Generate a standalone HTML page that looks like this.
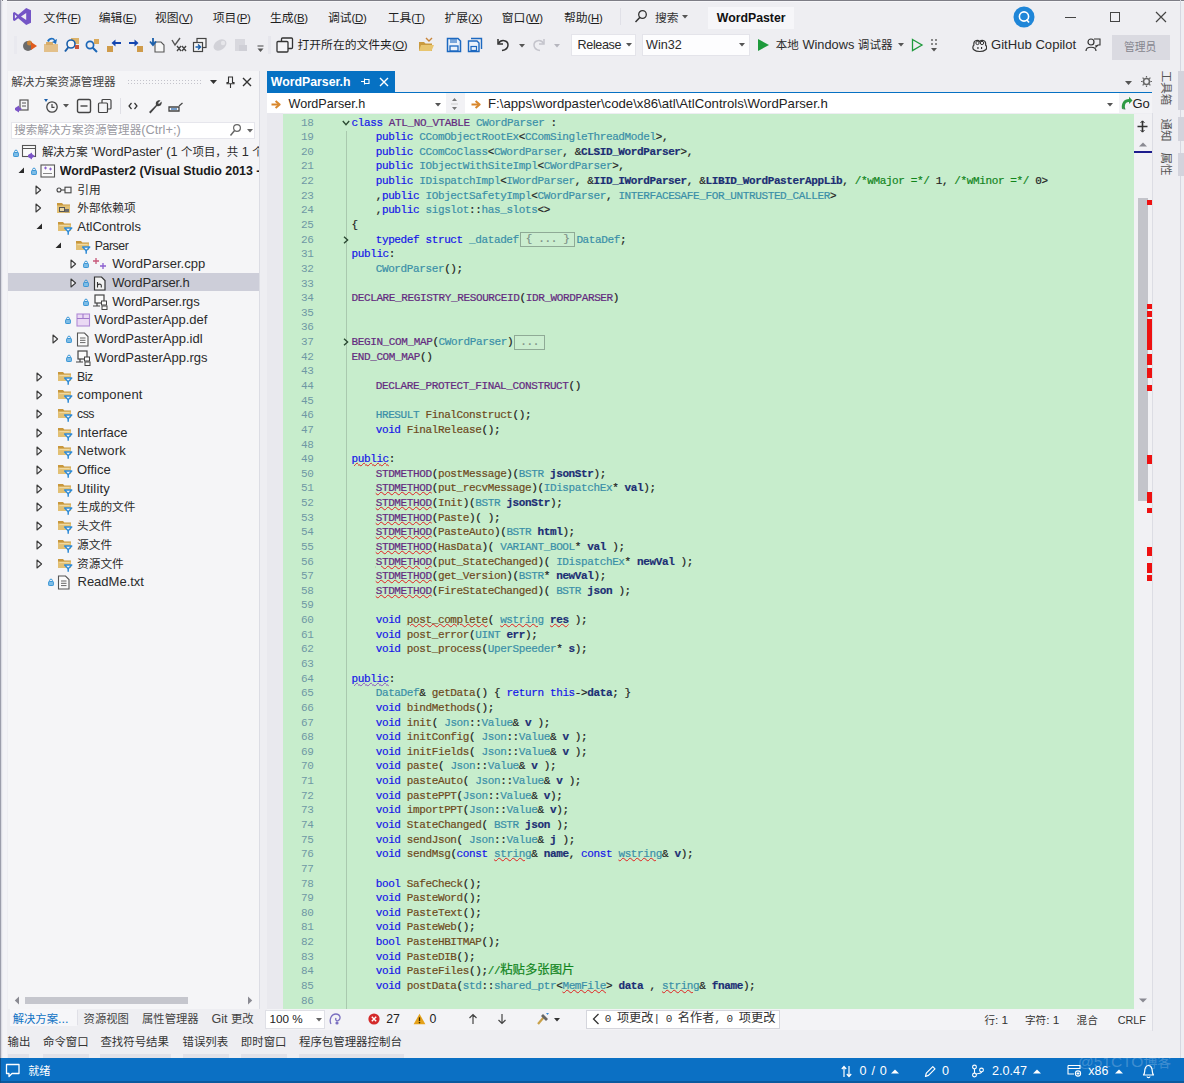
<!DOCTYPE html>
<html lang="zh-CN"><head><meta charset="utf-8"><title>WordPaster - Microsoft Visual Studio</title>
<style>
html,body{margin:0;padding:0;}
body{width:1184px;height:1083px;overflow:hidden;background:#eeeef2;}
#app{position:relative;width:1184px;height:1083px;overflow:hidden;background:#eeeef2;
 font-family:"Liberation Sans","Noto Sans CJK SC",sans-serif;font-size:13px;color:#2b2b2b;}
.t{position:absolute;white-space:pre;}
.r{position:absolute;}
i{font-style:normal;}
i.c{font-size:.9em;}
.b{font-weight:bold;}
u{text-decoration:underline;text-underline-offset:1px;}
.zh{font-size:12.4px;letter-spacing:0;}
.code{-webkit-text-stroke:0.2px currentColor;font-family:"Liberation Mono","Noto Sans CJK SC",monospace;font-size:11px;letter-spacing:-0.38px;color:#222;}
.ln{font-family:"Liberation Mono",monospace;font-size:11px;letter-spacing:-0.38px;color:#6f98a4;text-align:right;width:40px;}
.k{color:#1515e8;} .ty{color:#3a8fa8;} .m{color:#642a80;} .f{color:#6e4a1c;} .p{color:#1c2f74;font-weight:bold;} .cm{color:#12851c;} .g{color:#777;}
.sq{text-decoration:underline wavy #e02020;text-decoration-thickness:1px;text-underline-offset:0px;}
.sqb{text-decoration:underline wavy #8a4fc0;text-decoration-thickness:1px;text-underline-offset:0px;}
.box{display:inline-block;border:1px solid #8faa96;color:#7d8f85;height:15px;line-height:13px;margin:0 1px;padding:0 5px;vertical-align:middle;box-sizing:border-box;background:#cbeed0;}
.chg{font-family:"Liberation Mono","Noto Sans CJK SC",monospace;font-size:11px;letter-spacing:-.5px;color:#333;}
.chg .z{font-size:12.2px;letter-spacing:0;}
.mz{font-size:11.8px;letter-spacing:0;}

</style></head>
<body>
<div id="app">
<div class="r" style="left:0px;top:0px;width:1184px;height:1.2px;background:#7d7d86;"></div>
<div class="r" style="left:0px;top:1.2px;width:1184px;height:1px;background:#f6f6f9;"></div>
<div class="r" style="left:0px;top:0px;width:1.3px;height:1083px;background:#9b9dab;"></div>
<div class="r" style="left:1.3px;top:0px;width:1.2px;height:1060px;background:#dadbe3;"></div>
<div class="r" style="left:2.5px;top:0px;width:4.5px;height:1060px;background:#f3f3f7;"></div>
<div class="r" style="left:1179.5px;top:0px;width:1.5px;height:1060px;background:#d6d7e0;"></div>
<svg class="r" style="left:12px;top:7px;" width="20" height="19" viewBox="0 0 20 19"><path d="M14.2 1 L19 3.2 V15.8 L14.2 18 L6.2 11.2 L2.6 14 L1 13.2 V5.8 L2.6 5 L6.2 7.8 Z M14.2 6 L9 9.5 L14.2 13 Z M2.9 7.4 V11.6 L5 9.5 Z" fill="#7455c6" fill-rule="evenodd"/></svg>
<div class="t " style="left:43.6px;top:7.80px;height:20px;line-height:20px;font-size:11.4px;letter-spacing:-.35px;color:#1e1e1e;"><i class="mz">文件</i>(<u>F</u>)</div>
<div class="t " style="left:98.8px;top:7.80px;height:20px;line-height:20px;font-size:11.4px;letter-spacing:-.35px;color:#1e1e1e;"><i class="mz">编辑</i>(<u>E</u>)</div>
<div class="t " style="left:155px;top:7.80px;height:20px;line-height:20px;font-size:11.4px;letter-spacing:-.35px;color:#1e1e1e;"><i class="mz">视图</i>(<u>V</u>)</div>
<div class="t " style="left:212.8px;top:7.80px;height:20px;line-height:20px;font-size:11.4px;letter-spacing:-.35px;color:#1e1e1e;"><i class="mz">项目</i>(<u>P</u>)</div>
<div class="t " style="left:270px;top:7.80px;height:20px;line-height:20px;font-size:11.4px;letter-spacing:-.35px;color:#1e1e1e;"><i class="mz">生成</i>(<u>B</u>)</div>
<div class="t " style="left:328px;top:7.80px;height:20px;line-height:20px;font-size:11.4px;letter-spacing:-.35px;color:#1e1e1e;"><i class="mz">调试</i>(<u>D</u>)</div>
<div class="t " style="left:387.7px;top:7.80px;height:20px;line-height:20px;font-size:11.4px;letter-spacing:-.35px;color:#1e1e1e;"><i class="mz">工具</i>(<u>T</u>)</div>
<div class="t " style="left:444.5px;top:7.80px;height:20px;line-height:20px;font-size:11.4px;letter-spacing:-.35px;color:#1e1e1e;"><i class="mz">扩展</i>(<u>X</u>)</div>
<div class="t " style="left:501.8px;top:7.80px;height:20px;line-height:20px;font-size:11.4px;letter-spacing:-.35px;color:#1e1e1e;"><i class="mz">窗口</i>(<u>W</u>)</div>
<div class="t " style="left:564px;top:7.80px;height:20px;line-height:20px;font-size:11.4px;letter-spacing:-.35px;color:#1e1e1e;"><i class="mz">帮助</i>(<u>H</u>)</div>
<svg class="r" style="left:634px;top:9px;" width="14" height="15" viewBox="0 0 14 15"><circle cx="8.5" cy="5.5" r="3.8" fill="none" stroke="#333" stroke-width="1.3"/><path d="M6 8.2 L1.5 13" stroke="#333" stroke-width="1.5"/></svg>
<div class="t " style="left:655px;top:7.80px;height:20px;line-height:20px;color:#333;"><i class="mz">搜索</i></div>
<svg class="r" style="left:682px;top:15px;" width="7" height="5" viewBox="0 0 7 5"><path d="M0 0 H6 L3 3.5 Z" fill="#555"/></svg>
<div class="r" style="left:708px;top:6.5px;width:86px;height:22px;background:#f6f6f9;"></div>
<div class="r" style="left:620px;top:8px;width:1px;height:17px;background:#e0e0e7;"></div>
<div class="t b" style="left:716.8px;top:7.80px;height:20px;line-height:20px;font-size:12.3px;color:#111;">WordPaster</div>
<svg class="r" style="left:1013px;top:6px;" width="22" height="22" viewBox="0 0 22 22"><circle cx="11" cy="11" r="10.5" fill="#1f86d8"/><circle cx="11" cy="10.5" r="4.6" fill="none" stroke="#fff" stroke-width="1.6"/><path d="M13.5 13.5 L16 16.5" stroke="#fff" stroke-width="1.6"/></svg>
<div class="r" style="left:1065px;top:17px;width:11px;height:1px;background:#444;"></div>
<div class="r" style="left:1110px;top:12px;width:10px;height:10px;background:transparent;border:1px solid #444;box-sizing:border-box;"></div>
<svg class="r" style="left:1155px;top:11px;" width="12" height="12" viewBox="0 0 12 12"><path d="M1 1 L11 11 M11 1 L1 11" stroke="#444" stroke-width="1.2"/></svg>
<div class="r" style="left:14px;top:36px;width:3px;height:18px;background:#e9e9ef;"></div>
<svg class="r" style="left:22px;top:37px;" width="16" height="16" viewBox="0 0 16 16"><circle cx="6" cy="9" r="5" fill="#6b6b6b"/><circle cx="7.5" cy="6" r="2.5" fill="#c9853a"/><path d="M9 5 L15 9 L9 13 Z" fill="#e05a1c"/></svg>
<svg class="r" style="left:43px;top:37px;" width="16" height="16" viewBox="0 0 16 16"><path d="M1 7 H15 V15 H1 Z" fill="#e3c08a"/><path d="M3 5 H10 V8 H3Z" fill="#d8ad6a"/><path d="M4 4 C6 0 11 0 12 3 L14 2 L13 7 L9 5 L11 4 C10 2 7 2 6 5Z" fill="#1f6fc0"/></svg>
<svg class="r" style="left:64px;top:37px;" width="16" height="16" viewBox="0 0 16 16"><path d="M7 1 H15 V7 H7Z" fill="#dcb36a"/><circle cx="7" cy="7" r="4" fill="#f6f6f6" stroke="#1b5faa" stroke-width="1.6"/><path d="M4.5 10 L1 14.5" stroke="#1b5faa" stroke-width="2"/><rect x="11" y="8" width="4" height="4" fill="#c9533a"/></svg>
<svg class="r" style="left:84px;top:37px;" width="16" height="16" viewBox="0 0 16 16"><circle cx="6" cy="8" r="3.6" fill="none" stroke="#1b67b8" stroke-width="1.7"/><path d="M8.7 10.7 L13 15" stroke="#1b67b8" stroke-width="2"/><rect x="10" y="2" width="5" height="5" fill="#d8a85a"/></svg>
<svg class="r" style="left:106px;top:37px;" width="16" height="16" viewBox="0 0 16 16"><rect x="1" y="9" width="6" height="6" fill="#cf9b4a"/><path d="M15 5 H9.5 V2.5 L5.5 6 L9.5 9.5 V7 H15Z" fill="#1446b0"/></svg>
<svg class="r" style="left:128px;top:37px;" width="16" height="16" viewBox="0 0 16 16"><rect x="9" y="9" width="6" height="6" fill="#cf9b4a"/><path d="M1 5 H6.5 V2.5 L10.5 6 L6.5 9.5 V7 H1Z" fill="#1446b0"/></svg>
<svg class="r" style="left:149px;top:37px;" width="16" height="16" viewBox="0 0 16 16"><path d="M6 5 H12 L15 8 V15 H6Z" fill="#f6f6f6" stroke="#555" stroke-width="1.1"/><path d="M4 1 V7 M1 4.5 L4 8 L7 4.5" fill="none" stroke="#1b5faa" stroke-width="1.8"/></svg>
<svg class="r" style="left:171px;top:37px;" width="16" height="16" viewBox="0 0 16 16"><path d="M1 3 L4 8 L9 1" fill="none" stroke="#555" stroke-width="1.4"/><path d="M6 9 L10 14 M10 9 L6 14 M11 9 L15 14 M15 9 L11 14" stroke="#444" stroke-width="1.3"/></svg>
<svg class="r" style="left:192px;top:37px;" width="16" height="16" viewBox="0 0 16 16"><rect x="5" y="1.5" width="9" height="9" fill="#f6f6f6" stroke="#444" stroke-width="1.2"/><rect x="1.5" y="5.5" width="9" height="9" fill="#f6f6f6" stroke="#444" stroke-width="1.2"/><path d="M3.5 10 H8 M6 7.5 L8.5 10 L6 12.5" fill="none" stroke="#1b5faa" stroke-width="1.4"/></svg>
<svg class="r" style="left:212px;top:37px;" width="16" height="16" viewBox="0 0 16 16"><ellipse cx="8" cy="8" rx="7" ry="5" transform="rotate(-35 8 8)" fill="#d2d2d8"/><circle cx="11" cy="6" r="2.2" fill="#e6e6ea"/></svg>
<svg class="r" style="left:233px;top:37px;" width="16" height="16" viewBox="0 0 16 16"><rect x="2" y="2" width="10" height="12" fill="#d8d8de"/><rect x="6" y="8" width="8" height="6" fill="#cfcfd6"/></svg>
<svg class="r" style="left:256px;top:45px;" width="10" height="9" viewBox="0 0 10 9"><path d="M1.5 1 H7.5" stroke="#555" stroke-width="1.1"/><path d="M1.5 3.5 H7.5 L4.5 7Z" fill="#555"/></svg>
<div class="r" style="left:268px;top:36px;width:3px;height:18px;background:#e6e6ec;"></div>
<svg class="r" style="left:276px;top:37px;" width="18" height="16" viewBox="0 0 18 16"><rect x="5.5" y="1" width="11" height="10.5" rx="1" fill="#f4f4f7" stroke="#333" stroke-width="1.3"/><rect x="1" y="4.5" width="11" height="10.5" rx="1" fill="#f4f4f7" stroke="#333" stroke-width="1.3"/></svg>
<div class="t " style="left:297.5px;top:35.30px;height:20px;line-height:20px;font-size:11.4px;letter-spacing:-.35px;color:#1e1e1e;"><i class="mz">打开所在的文件夹</i>(<u>O</u>)</div>
<svg class="r" style="left:418px;top:37px;" width="16" height="16" viewBox="0 0 16 16"><path d="M1 5 H6 L7.5 6.5 H14 V14 H1Z" fill="#c99a3f"/><path d="M3 8 H16 L13.5 14 H1Z" fill="#e8c56f"/><path d="M8 1 L11 4 L14 1" fill="none" stroke="#c9853a" stroke-width="1.4"/></svg>
<svg class="r" style="left:446px;top:37px;" width="16" height="16" viewBox="0 0 16 16"><path d="M1.5 1.5 H12 L14.5 4 V14.5 H1.5Z" fill="#eaf2fb" stroke="#1c68c0" stroke-width="1.5"/><rect x="4" y="2" width="7" height="4" fill="#1c68c0" opacity=".55"/><rect x="4" y="9" width="8" height="5" fill="none" stroke="#1c68c0" stroke-width="1.3"/></svg>
<svg class="r" style="left:467px;top:37px;" width="16" height="16" viewBox="0 0 16 16"><path d="M4 1.5 H14.5 V12" fill="none" stroke="#1c68c0" stroke-width="1.4"/><path d="M1.5 4 H10 L12 6 V14.5 H1.5Z" fill="#eaf2fb" stroke="#1c68c0" stroke-width="1.4"/><rect x="4" y="9.5" width="5.5" height="4" fill="none" stroke="#1c68c0" stroke-width="1.2"/></svg>
<svg class="r" style="left:496px;top:37px;" width="14" height="15" viewBox="0 0 14 15"><path d="M2 2 V7 H7" fill="none" stroke="#333" stroke-width="1.5"/><path d="M2.5 6.5 C5 2 12 3 12 8 C12 11 9 13 6 13.5" fill="none" stroke="#333" stroke-width="1.5"/></svg>
<svg class="r" style="left:519px;top:44px;" width="7" height="5" viewBox="0 0 7 5"><path d="M0 0 H6 L3 3.5 Z" fill="#555"/></svg>
<svg class="r" style="left:532px;top:37px;" width="14" height="15" viewBox="0 0 14 15"><path d="M12 2 V7 H7" fill="none" stroke="#c4c4cc" stroke-width="1.5"/><path d="M11.5 6.5 C9 2 2 3 2 8 C2 11 5 13 8 13.5" fill="none" stroke="#c4c4cc" stroke-width="1.5"/></svg>
<svg class="r" style="left:554px;top:44px;" width="7" height="5" viewBox="0 0 7 5"><path d="M0 0 H6 L3 3.5 Z" fill="#b5b5bd"/></svg>
<div class="r" style="left:571px;top:34px;width:65px;height:22px;background:#fdfdfe;border:1px solid #e4e4ea;box-sizing:border-box;"></div>
<div class="t " style="left:577.6px;top:35.30px;height:20px;line-height:20px;font-size:12.6px;letter-spacing:-.4px;">Release</div>
<svg class="r" style="left:626px;top:43px;" width="7" height="5" viewBox="0 0 7 5"><path d="M0 0 H6 L3 3.5 Z" fill="#555"/></svg>
<div class="r" style="left:642px;top:34px;width:108px;height:22px;background:#fdfdfe;border:1px solid #e4e4ea;box-sizing:border-box;"></div>
<div class="t " style="left:646px;top:35.30px;height:20px;line-height:20px;font-size:12.6px;">Win32</div>
<svg class="r" style="left:739px;top:43px;" width="7" height="5" viewBox="0 0 7 5"><path d="M0 0 H6 L3 3.5 Z" fill="#555"/></svg>
<svg class="r" style="left:756px;top:38px;" width="14" height="14" viewBox="0 0 14 14"><path d="M2 1 L13 7 L2 13Z" fill="#1e9a3c"/></svg>
<div class="t " style="left:775.8px;top:35.30px;height:20px;line-height:20px;font-size:12.8px;"><i class="c">本地</i> Windows <i class="c">调试器</i></div>
<svg class="r" style="left:898px;top:43px;" width="7" height="5" viewBox="0 0 7 5"><path d="M0 0 H6 L3 3.5 Z" fill="#555"/></svg>
<svg class="r" style="left:910px;top:38px;" width="14" height="14" viewBox="0 0 14 14"><path d="M2.5 1.5 L12 7 L2.5 12.5Z" fill="none" stroke="#1e9a3c" stroke-width="1.3"/></svg>
<svg class="r" style="left:929px;top:38px;" width="10" height="16" viewBox="0 0 10 16"><circle cx="3" cy="2" r="1" fill="#666"/><circle cx="7" cy="2" r="1" fill="#666"/><circle cx="3" cy="6" r="1" fill="#666"/><circle cx="7" cy="6" r="1" fill="#666"/><path d="M2 10 H8 L5 13.5Z" fill="#555"/></svg>
<svg class="r" style="left:971.5px;top:38px;" width="15.5" height="14.5" viewBox="0 0 17 16"><path d="M2 6 C2 2 7 2 8.5 4 C10 2 15 2 15 6 V8 C16.5 9 16.5 12 15 13 C12 15.5 5 15.5 2 13 C0.5 12 0.5 9 2 8Z" fill="none" stroke="#333" stroke-width="1.3"/><circle cx="6" cy="5.5" r="1.8" fill="none" stroke="#333" stroke-width="1.1"/><circle cx="11" cy="5.5" r="1.8" fill="none" stroke="#333" stroke-width="1.1"/><path d="M6.5 10 V12 M10.5 10 V12" stroke="#333" stroke-width="1.3"/></svg>
<div class="t " style="left:991px;top:35.00px;height:20px;line-height:20px;font-size:13.1px;">GitHub Copilot</div>
<svg class="r" style="left:1085px;top:37px;" width="16" height="16" viewBox="0 0 16 16"><circle cx="6" cy="5" r="3" fill="none" stroke="#333" stroke-width="1.2"/><path d="M1 14 C1 9 11 9 11 14" fill="none" stroke="#333" stroke-width="1.2"/><path d="M9 2 H15 V8 H13 L11 10 V8" fill="none" stroke="#333" stroke-width="1.1"/></svg>
<div class="r" style="left:1112px;top:34.5px;width:57.5px;height:25px;background:#dadae1;"></div>
<div class="t " style="left:1124px;top:37.00px;height:20px;line-height:20px;font-size:12px;color:#85858e;"><i class="c">管理员</i></div>
<div class="r" style="left:8px;top:71px;width:252px;height:937.5px;background:#f5f5f7;"></div>
<div class="r" style="left:259px;top:71px;width:1px;height:937.5px;background:#dcdde4;"></div>
<div class="r" style="left:9.6px;top:1008.5px;width:67px;height:17.5px;background:#f6f6f9;"></div>
<div class="r" style="left:77px;top:1010px;width:1px;height:15px;background:#e0e0e7;"></div>
<div class="t " style="left:11.2px;top:72.40px;height:20px;line-height:20px;font-size:12.9px;color:#444;"><i class="c">解决方案资源管理器</i></div>
<div class="r" style="left:127px;top:79px;width:75px;height:6px;background:transparent;background-image:radial-gradient(#c4c4cc 0.8px,transparent 1px);background-size:3px 3px;"></div>
<svg class="r" style="left:210px;top:80px;" width="8" height="5" viewBox="0 0 8 5"><path d="M0 0 H7 L3.5 4 Z" fill="#333"/></svg>
<svg class="r" style="left:226px;top:76px;" width="9" height="13" viewBox="0 0 9 13"><path d="M2.5 1 H6.5 V6.5 H8 V7.8 H1 V6.5 H2.5Z M4.5 8 V12" fill="#f5f5f7" stroke="#333" stroke-width="1.1"/></svg>
<svg class="r" style="left:242px;top:77px;" width="10" height="10" viewBox="0 0 10 10"><path d="M1 1 L9 9 M9 1 L1 9" stroke="#333" stroke-width="1.4"/></svg>
<svg class="r" style="left:14px;top:98px;" width="16" height="16" viewBox="0 0 16 16"><rect x="6" y="2" width="8" height="10" fill="none" stroke="#555" stroke-width="1.2"/><path d="M8 5 H12 M8 8 H12" stroke="#555"/><path d="M1 10 L5 7.5 V14.5 L1 12Z M5 9 L8 11 L5 13" fill="#7c55c8"/></svg>
<svg class="r" style="left:43px;top:98px;" width="16" height="16" viewBox="0 0 16 16"><circle cx="9" cy="9" r="5.2" fill="none" stroke="#444" stroke-width="1.3"/><path d="M9 6 V9.3 H11.5" fill="none" stroke="#444" stroke-width="1.2"/><path d="M1 1 L5 1 L3 4Z" fill="#1b5faa"/></svg>
<svg class="r" style="left:63px;top:104px;" width="7" height="5" viewBox="0 0 7 5"><path d="M0 0 H6 L3 3.5 Z" fill="#555"/></svg>
<svg class="r" style="left:76px;top:98px;" width="16" height="16" viewBox="0 0 16 16"><rect x="1.5" y="1.5" width="13" height="13" rx="1.5" fill="none" stroke="#444" stroke-width="1.4"/><path d="M4.5 8 H11.5" stroke="#444" stroke-width="1.4"/></svg>
<svg class="r" style="left:97px;top:98px;" width="16" height="16" viewBox="0 0 16 16"><rect x="5" y="1.5" width="9" height="9.5" rx="1" fill="none" stroke="#444" stroke-width="1.2"/><rect x="1.5" y="5" width="9" height="9.5" rx="1" fill="#f5f5f7" stroke="#444" stroke-width="1.2"/></svg>
<div class="r" style="left:120px;top:98px;width:1px;height:16px;background:#e0e0e6;"></div>
<svg class="r" style="left:128px;top:102px;" width="10" height="8" viewBox="0 0 10 8"><path d="M3.5 1 L1 4 L3.5 7 M6.5 1 L9 4 L6.5 7" fill="none" stroke="#333" stroke-width="1.2"/></svg>
<svg class="r" style="left:147px;top:98px;" width="16" height="16" viewBox="0 0 16 16"><path d="M2 14 L9 7 C8 4 10.5 1.5 13.5 2.5 L11 5 L12 6 L14.5 3.5 C15.5 6.5 13 9 10 8 L3.5 15.5Z" fill="#444"/></svg>
<svg class="r" style="left:168px;top:98px;" width="16" height="16" viewBox="0 0 16 16"><path d="M1 9 H11 V13 H1Z" fill="none" stroke="#444" stroke-width="1.3"/><path d="M11 8 L14.5 5" stroke="#444" stroke-width="1.2"/><path d="M3 11 H9" stroke="#1b5faa" stroke-width="1.2"/></svg>
<div class="r" style="left:11px;top:121.5px;width:244px;height:17px;background:#ffffff;border:1px solid #e6e6ec;box-sizing:border-box;"></div>
<div class="t " style="left:14.2px;top:120.00px;height:20px;line-height:20px;font-size:12.85px;color:#9a9aa2;"><i class="c">搜索解决方案资源管理器</i>(Ctrl+;)</div>
<svg class="r" style="left:229px;top:123px;" width="13" height="14" viewBox="0 0 13 14"><circle cx="8" cy="5" r="3.4" fill="none" stroke="#666" stroke-width="1.2"/><path d="M5.6 7.6 L1.5 12.5" stroke="#666" stroke-width="1.5"/></svg>
<svg class="r" style="left:247px;top:129px;" width="7" height="5" viewBox="0 0 7 5"><path d="M0 0 H6 L3 3.5 Z" fill="#666"/></svg>
<svg class="r" style="left:13px;top:148.6px;" width="6" height="8" viewBox="0 0 6 8"><path d="M1.6 3.6 V2.4 C1.6 .7 4.4 .7 4.4 2.4 V3.6" fill="none" stroke="#3a96d6" stroke-width="1"/><rect x=".6" y="3.5" width="4.8" height="4" rx=".6" fill="#7fbde6" stroke="#3a96d6" stroke-width="1"/></svg>
<svg class="r" style="left:21px;top:144.1px;" width="17" height="16" viewBox="0 0 17 16"><rect x="1.5" y="1.5" width="13" height="11" fill="#fafafa" stroke="#555" stroke-width="1.1"/><path d="M1.5 4.5 H14.5" stroke="#555"/><path d="M7 11 L11 8.5 V15.5 L7 13Z M11 10 L14 12 L11 14" fill="#7c55c8"/></svg>
<div class="t " style="left:41.9px;top:142.10px;height:20px;line-height:20px;font-size:12.7px;width:217px;overflow:hidden;"><i class="c">解决方案</i> 'WordPaster' (1 <i class="c">个项目，共</i> 1 <i class="c">个</i>)</div>
<svg class="r" style="left:18.3px;top:167.29999999999998px;" width="7" height="7" viewBox="0 0 7 7"><path d="M6 .5 V6 H.5Z" fill="#2a2a2a"/></svg>
<svg class="r" style="left:31px;top:166.79999999999998px;" width="6" height="8" viewBox="0 0 6 8"><path d="M1.6 3.6 V2.4 C1.6 .7 4.4 .7 4.4 2.4 V3.6" fill="none" stroke="#3a96d6" stroke-width="1"/><rect x=".6" y="3.5" width="4.8" height="4" rx=".6" fill="#7fbde6" stroke="#3a96d6" stroke-width="1"/></svg>
<svg class="r" style="left:40px;top:163.79999999999998px;" width="16" height="14" viewBox="0 0 16 14"><rect x="1" y="1" width="13.5" height="12" fill="#fafafa" stroke="#555" stroke-width="1.1"/><path d="M4 4 H7 M5.5 2.6 V5.4 M9 5 H12 M10.5 3.6 V6.4" stroke="#8a5fd0" stroke-width="1"/><path d="M3 9.5 H12" stroke="#888"/></svg>
<div class="t b" style="left:59.8px;top:160.80px;height:20px;line-height:20px;font-size:12.4px;width:199px;overflow:hidden;color:#1a1a1a;">WordPaster2 (Visual Studio 2013 -</div>
<svg class="r" style="left:35px;top:184.5px;" width="7" height="10" viewBox="0 0 7 10"><path d="M1 1 L5.6 5 L1 9Z" fill="#f5f5f7" stroke="#3a3a3a" stroke-width="1.1" stroke-linejoin="round"/></svg>
<svg class="r" style="left:56px;top:185.5px;" width="17" height="8" viewBox="0 0 17 8"><circle cx="3" cy="4" r="2" fill="none" stroke="#444" stroke-width="1.1"/><path d="M5 4 H9" stroke="#444" stroke-width="1.1"/><rect x="9" y="1.2" width="6" height="5.6" fill="none" stroke="#444" stroke-width="1.1"/></svg>
<div class="t " style="left:77.2px;top:179.50px;height:20px;line-height:20px;"><i class="c">引用</i></div>
<svg class="r" style="left:35px;top:203.2px;" width="7" height="10" viewBox="0 0 7 10"><path d="M1 1 L5.6 5 L1 9Z" fill="#f5f5f7" stroke="#3a3a3a" stroke-width="1.1" stroke-linejoin="round"/></svg>
<svg class="r" style="left:56px;top:200.2px;" width="16" height="16" viewBox="0 0 16 16"><path d="M1 3 H6 L7.3 4.4 H14 V13 H1Z" fill="#c8973c"/><path d="M1 5.4 H14 V13 H1Z" fill="#e2c074"/><rect x="3" y="7" width="6" height="5" fill="#555"/><rect x="4" y="8" width="4" height="3" fill="#e9d7a8"/><rect x="9" y="9" width="4" height="3.2" fill="#6b6b6b"/></svg>
<div class="t " style="left:77.2px;top:198.20px;height:20px;line-height:20px;"><i class="c">外部依赖项</i></div>
<svg class="r" style="left:36px;top:223.39999999999998px;" width="7" height="7" viewBox="0 0 7 7"><path d="M6 .5 V6 H.5Z" fill="#2a2a2a"/></svg>
<svg class="r" style="left:57px;top:218.89999999999998px;" width="16" height="16" viewBox="0 0 16 16"><path d="M1 3 H6 L7.3 4.4 H14 V12 H1Z" fill="#c8973c"/><path d="M1 5.4 H14 V12 H1Z" fill="#e2c074"/><path d="M2.4 6.6 H12.6" stroke="#f1dca6" stroke-width="1"/><path d="M7.6 9 H14.8 L11.2 12.8Z" fill="#f5f5f7" stroke="#2f8bd6" stroke-width="1.3" stroke-linejoin="round"/><path d="M11.2 12.5 V15.8" stroke="#2f8bd6" stroke-width="1.5"/></svg>
<div class="t " style="left:77.3px;top:216.90px;height:20px;line-height:20px;">AtlControls</div>
<svg class="r" style="left:54.5px;top:242.1px;" width="7" height="7" viewBox="0 0 7 7"><path d="M6 .5 V6 H.5Z" fill="#2a2a2a"/></svg>
<svg class="r" style="left:75px;top:237.6px;" width="16" height="16" viewBox="0 0 16 16"><path d="M1 3 H6 L7.3 4.4 H14 V12 H1Z" fill="#c8973c"/><path d="M1 5.4 H14 V12 H1Z" fill="#e2c074"/><path d="M2.4 6.6 H12.6" stroke="#f1dca6" stroke-width="1"/><path d="M7.6 9 H14.8 L11.2 12.8Z" fill="#f5f5f7" stroke="#2f8bd6" stroke-width="1.3" stroke-linejoin="round"/><path d="M11.2 12.5 V15.8" stroke="#2f8bd6" stroke-width="1.5"/></svg>
<div class="t " style="left:94.7px;top:235.60px;height:20px;line-height:20px;font-size:12.3px;letter-spacing:-.4px;">Parser</div>
<svg class="r" style="left:70px;top:259.29999999999995px;" width="7" height="10" viewBox="0 0 7 10"><path d="M1 1 L5.6 5 L1 9Z" fill="#f5f5f7" stroke="#3a3a3a" stroke-width="1.1" stroke-linejoin="round"/></svg>
<svg class="r" style="left:83px;top:260.29999999999995px;" width="6" height="8" viewBox="0 0 6 8"><path d="M1.6 3.6 V2.4 C1.6 .7 4.4 .7 4.4 2.4 V3.6" fill="none" stroke="#3a96d6" stroke-width="1"/><rect x=".6" y="3.5" width="4.8" height="4" rx=".6" fill="#7fbde6" stroke="#3a96d6" stroke-width="1"/></svg>
<svg class="r" style="left:92px;top:257.29999999999995px;" width="16" height="14" viewBox="0 0 16 14"><path d="M4 1 V7 M1 4 H7" stroke="#c7577a" stroke-width="1.3"/><path d="M11 6 V12 M8 9 H14" stroke="#8a5fd0" stroke-width="1.3"/></svg>
<div class="t " style="left:112.2px;top:254.30px;height:20px;line-height:20px;">WordParser.cpp</div>
<div class="r" style="left:8px;top:273.4px;width:251px;height:17.8px;background:#cdced9;"></div>
<svg class="r" style="left:70px;top:278.0px;" width="7" height="10" viewBox="0 0 7 10"><path d="M1 1 L5.6 5 L1 9Z" fill="#f5f5f7" stroke="#3a3a3a" stroke-width="1.1" stroke-linejoin="round"/></svg>
<svg class="r" style="left:83px;top:279.0px;" width="6" height="8" viewBox="0 0 6 8"><path d="M1.6 3.6 V2.4 C1.6 .7 4.4 .7 4.4 2.4 V3.6" fill="none" stroke="#3a96d6" stroke-width="1"/><rect x=".6" y="3.5" width="4.8" height="4" rx=".6" fill="#7fbde6" stroke="#3a96d6" stroke-width="1"/></svg>
<svg class="r" style="left:92.5px;top:275.5px;" width="14" height="15" viewBox="0 0 14 15"><path d="M1.5 1 H8.5 L12 4.5 V14 H1.5Z" fill="#f2f2f2" stroke="#333" stroke-width="1.2"/><path d="M4.5 6 V11.5 M4.5 9 C6 7.6 8.3 7.8 8.3 9.6 V11.5" fill="none" stroke="#333" stroke-width="1.1"/></svg>
<div class="t " style="left:112.2px;top:273.00px;height:20px;line-height:20px;letter-spacing:-.15px;">WordParser.h</div>
<svg class="r" style="left:83px;top:297.7px;" width="6" height="8" viewBox="0 0 6 8"><path d="M1.6 3.6 V2.4 C1.6 .7 4.4 .7 4.4 2.4 V3.6" fill="none" stroke="#3a96d6" stroke-width="1"/><rect x=".6" y="3.5" width="4.8" height="4" rx=".6" fill="#7fbde6" stroke="#3a96d6" stroke-width="1"/></svg>
<svg class="r" style="left:91.5px;top:293.7px;" width="16" height="16" viewBox="0 0 16 16"><rect x="3" y="1" width="9" height="8" fill="#fafafa" stroke="#444" stroke-width="1.2"/><path d="M1 12 H8 M5 9 V12" stroke="#444" stroke-width="1.2"/><rect x="9.5" y="7" width="5" height="4" fill="#fafafa" stroke="#444"/><rect x="10" y="12" width="5" height="3.5" fill="#fafafa" stroke="#444"/></svg>
<div class="t " style="left:112.2px;top:291.70px;height:20px;line-height:20px;letter-spacing:-.2px;">WordParser.rgs</div>
<svg class="r" style="left:65.3px;top:316.4px;" width="6" height="8" viewBox="0 0 6 8"><path d="M1.6 3.6 V2.4 C1.6 .7 4.4 .7 4.4 2.4 V3.6" fill="none" stroke="#3a96d6" stroke-width="1"/><rect x=".6" y="3.5" width="4.8" height="4" rx=".6" fill="#7fbde6" stroke="#3a96d6" stroke-width="1"/></svg>
<svg class="r" style="left:76px;top:313.4px;" width="15" height="14" viewBox="0 0 15 14"><rect x="1" y="1" width="12.5" height="12" fill="#ead9f4" stroke="#b08ad6" stroke-width="1.1"/><path d="M1 5.5 H13.5 M7 1 V5.5" stroke="#a07acb" stroke-width="1.1"/></svg>
<div class="t " style="left:94.2px;top:310.40px;height:20px;line-height:20px;">WordPasterApp.def</div>
<svg class="r" style="left:52px;top:334.1px;" width="7" height="10" viewBox="0 0 7 10"><path d="M1 1 L5.6 5 L1 9Z" fill="#f5f5f7" stroke="#3a3a3a" stroke-width="1.1" stroke-linejoin="round"/></svg>
<svg class="r" style="left:66px;top:335.1px;" width="6" height="8" viewBox="0 0 6 8"><path d="M1.6 3.6 V2.4 C1.6 .7 4.4 .7 4.4 2.4 V3.6" fill="none" stroke="#3a96d6" stroke-width="1"/><rect x=".6" y="3.5" width="4.8" height="4" rx=".6" fill="#7fbde6" stroke="#3a96d6" stroke-width="1"/></svg>
<svg class="r" style="left:76px;top:331.6px;" width="14" height="15" viewBox="0 0 14 15"><path d="M1.5 1 H8.5 L12 4.5 V14 H1.5Z" fill="#fafafa" stroke="#555" stroke-width="1.1"/><path d="M4 6 H9.5 M4 8.3 H9.5 M4 10.6 H9.5" stroke="#666" stroke-width="1"/></svg>
<div class="t " style="left:94.4px;top:329.10px;height:20px;line-height:20px;">WordPasterApp.idl</div>
<svg class="r" style="left:66px;top:353.79999999999995px;" width="6" height="8" viewBox="0 0 6 8"><path d="M1.6 3.6 V2.4 C1.6 .7 4.4 .7 4.4 2.4 V3.6" fill="none" stroke="#3a96d6" stroke-width="1"/><rect x=".6" y="3.5" width="4.8" height="4" rx=".6" fill="#7fbde6" stroke="#3a96d6" stroke-width="1"/></svg>
<svg class="r" style="left:75px;top:349.79999999999995px;" width="16" height="16" viewBox="0 0 16 16"><rect x="3" y="1" width="9" height="8" fill="#fafafa" stroke="#444" stroke-width="1.2"/><path d="M1 12 H8 M5 9 V12" stroke="#444" stroke-width="1.2"/><rect x="9.5" y="7" width="5" height="4" fill="#fafafa" stroke="#444"/><rect x="10" y="12" width="5" height="3.5" fill="#fafafa" stroke="#444"/></svg>
<div class="t " style="left:94.4px;top:347.80px;height:20px;line-height:20px;">WordPasterApp.rgs</div>
<svg class="r" style="left:35.5px;top:371.5px;" width="7" height="10" viewBox="0 0 7 10"><path d="M1 1 L5.6 5 L1 9Z" fill="#f5f5f7" stroke="#3a3a3a" stroke-width="1.1" stroke-linejoin="round"/></svg>
<svg class="r" style="left:57px;top:368.5px;" width="16" height="16" viewBox="0 0 16 16"><path d="M1 3 H6 L7.3 4.4 H14 V12 H1Z" fill="#c8973c"/><path d="M1 5.4 H14 V12 H1Z" fill="#e2c074"/><path d="M2.4 6.6 H12.6" stroke="#f1dca6" stroke-width="1"/><path d="M7.6 9 H14.8 L11.2 12.8Z" fill="#f5f5f7" stroke="#2f8bd6" stroke-width="1.3" stroke-linejoin="round"/><path d="M11.2 12.5 V15.8" stroke="#2f8bd6" stroke-width="1.5"/></svg>
<div class="t " style="left:77px;top:366.50px;height:20px;line-height:20px;font-size:12.3px;letter-spacing:-.45px;">Biz</div>
<svg class="r" style="left:35.5px;top:390.2px;" width="7" height="10" viewBox="0 0 7 10"><path d="M1 1 L5.6 5 L1 9Z" fill="#f5f5f7" stroke="#3a3a3a" stroke-width="1.1" stroke-linejoin="round"/></svg>
<svg class="r" style="left:57px;top:387.2px;" width="16" height="16" viewBox="0 0 16 16"><path d="M1 3 H6 L7.3 4.4 H14 V12 H1Z" fill="#c8973c"/><path d="M1 5.4 H14 V12 H1Z" fill="#e2c074"/><path d="M2.4 6.6 H12.6" stroke="#f1dca6" stroke-width="1"/><path d="M7.6 9 H14.8 L11.2 12.8Z" fill="#f5f5f7" stroke="#2f8bd6" stroke-width="1.3" stroke-linejoin="round"/><path d="M11.2 12.5 V15.8" stroke="#2f8bd6" stroke-width="1.5"/></svg>
<div class="t " style="left:77px;top:385.20px;height:20px;line-height:20px;letter-spacing:.14px;">component</div>
<svg class="r" style="left:35.5px;top:408.9px;" width="7" height="10" viewBox="0 0 7 10"><path d="M1 1 L5.6 5 L1 9Z" fill="#f5f5f7" stroke="#3a3a3a" stroke-width="1.1" stroke-linejoin="round"/></svg>
<svg class="r" style="left:57px;top:405.9px;" width="16" height="16" viewBox="0 0 16 16"><path d="M1 3 H6 L7.3 4.4 H14 V12 H1Z" fill="#c8973c"/><path d="M1 5.4 H14 V12 H1Z" fill="#e2c074"/><path d="M2.4 6.6 H12.6" stroke="#f1dca6" stroke-width="1"/><path d="M7.6 9 H14.8 L11.2 12.8Z" fill="#f5f5f7" stroke="#2f8bd6" stroke-width="1.3" stroke-linejoin="round"/><path d="M11.2 12.5 V15.8" stroke="#2f8bd6" stroke-width="1.5"/></svg>
<div class="t " style="left:77px;top:403.90px;height:20px;line-height:20px;font-size:12.3px;letter-spacing:-.5px;">css</div>
<svg class="r" style="left:35.5px;top:427.6px;" width="7" height="10" viewBox="0 0 7 10"><path d="M1 1 L5.6 5 L1 9Z" fill="#f5f5f7" stroke="#3a3a3a" stroke-width="1.1" stroke-linejoin="round"/></svg>
<svg class="r" style="left:57px;top:424.6px;" width="16" height="16" viewBox="0 0 16 16"><path d="M1 3 H6 L7.3 4.4 H14 V12 H1Z" fill="#c8973c"/><path d="M1 5.4 H14 V12 H1Z" fill="#e2c074"/><path d="M2.4 6.6 H12.6" stroke="#f1dca6" stroke-width="1"/><path d="M7.6 9 H14.8 L11.2 12.8Z" fill="#f5f5f7" stroke="#2f8bd6" stroke-width="1.3" stroke-linejoin="round"/><path d="M11.2 12.5 V15.8" stroke="#2f8bd6" stroke-width="1.5"/></svg>
<div class="t " style="left:77px;top:422.60px;height:20px;line-height:20px;">Interface</div>
<svg class="r" style="left:35.5px;top:446.29999999999995px;" width="7" height="10" viewBox="0 0 7 10"><path d="M1 1 L5.6 5 L1 9Z" fill="#f5f5f7" stroke="#3a3a3a" stroke-width="1.1" stroke-linejoin="round"/></svg>
<svg class="r" style="left:57px;top:443.29999999999995px;" width="16" height="16" viewBox="0 0 16 16"><path d="M1 3 H6 L7.3 4.4 H14 V12 H1Z" fill="#c8973c"/><path d="M1 5.4 H14 V12 H1Z" fill="#e2c074"/><path d="M2.4 6.6 H12.6" stroke="#f1dca6" stroke-width="1"/><path d="M7.6 9 H14.8 L11.2 12.8Z" fill="#f5f5f7" stroke="#2f8bd6" stroke-width="1.3" stroke-linejoin="round"/><path d="M11.2 12.5 V15.8" stroke="#2f8bd6" stroke-width="1.5"/></svg>
<div class="t " style="left:77px;top:441.30px;height:20px;line-height:20px;letter-spacing:.18px;">Network</div>
<svg class="r" style="left:35.5px;top:465.0px;" width="7" height="10" viewBox="0 0 7 10"><path d="M1 1 L5.6 5 L1 9Z" fill="#f5f5f7" stroke="#3a3a3a" stroke-width="1.1" stroke-linejoin="round"/></svg>
<svg class="r" style="left:57px;top:462.0px;" width="16" height="16" viewBox="0 0 16 16"><path d="M1 3 H6 L7.3 4.4 H14 V12 H1Z" fill="#c8973c"/><path d="M1 5.4 H14 V12 H1Z" fill="#e2c074"/><path d="M2.4 6.6 H12.6" stroke="#f1dca6" stroke-width="1"/><path d="M7.6 9 H14.8 L11.2 12.8Z" fill="#f5f5f7" stroke="#2f8bd6" stroke-width="1.3" stroke-linejoin="round"/><path d="M11.2 12.5 V15.8" stroke="#2f8bd6" stroke-width="1.5"/></svg>
<div class="t " style="left:77px;top:460.00px;height:20px;line-height:20px;">Office</div>
<svg class="r" style="left:35.5px;top:483.69999999999993px;" width="7" height="10" viewBox="0 0 7 10"><path d="M1 1 L5.6 5 L1 9Z" fill="#f5f5f7" stroke="#3a3a3a" stroke-width="1.1" stroke-linejoin="round"/></svg>
<svg class="r" style="left:57px;top:480.69999999999993px;" width="16" height="16" viewBox="0 0 16 16"><path d="M1 3 H6 L7.3 4.4 H14 V12 H1Z" fill="#c8973c"/><path d="M1 5.4 H14 V12 H1Z" fill="#e2c074"/><path d="M2.4 6.6 H12.6" stroke="#f1dca6" stroke-width="1"/><path d="M7.6 9 H14.8 L11.2 12.8Z" fill="#f5f5f7" stroke="#2f8bd6" stroke-width="1.3" stroke-linejoin="round"/><path d="M11.2 12.5 V15.8" stroke="#2f8bd6" stroke-width="1.5"/></svg>
<div class="t " style="left:77px;top:478.70px;height:20px;line-height:20px;letter-spacing:.15px;">Utility</div>
<svg class="r" style="left:35.5px;top:502.4px;" width="7" height="10" viewBox="0 0 7 10"><path d="M1 1 L5.6 5 L1 9Z" fill="#f5f5f7" stroke="#3a3a3a" stroke-width="1.1" stroke-linejoin="round"/></svg>
<svg class="r" style="left:57px;top:499.4px;" width="16" height="16" viewBox="0 0 16 16"><path d="M1 3 H6 L7.3 4.4 H14 V12 H1Z" fill="#c8973c"/><path d="M1 5.4 H14 V12 H1Z" fill="#e2c074"/><path d="M2.4 6.6 H12.6" stroke="#f1dca6" stroke-width="1"/><path d="M7.6 9 H14.8 L11.2 12.8Z" fill="#f5f5f7" stroke="#2f8bd6" stroke-width="1.3" stroke-linejoin="round"/><path d="M11.2 12.5 V15.8" stroke="#2f8bd6" stroke-width="1.5"/></svg>
<div class="t " style="left:77px;top:497.40px;height:20px;line-height:20px;"><i class="c">生成的文件</i></div>
<svg class="r" style="left:35.5px;top:521.1px;" width="7" height="10" viewBox="0 0 7 10"><path d="M1 1 L5.6 5 L1 9Z" fill="#f5f5f7" stroke="#3a3a3a" stroke-width="1.1" stroke-linejoin="round"/></svg>
<svg class="r" style="left:57px;top:518.1px;" width="16" height="16" viewBox="0 0 16 16"><path d="M1 3 H6 L7.3 4.4 H14 V12 H1Z" fill="#c8973c"/><path d="M1 5.4 H14 V12 H1Z" fill="#e2c074"/><path d="M2.4 6.6 H12.6" stroke="#f1dca6" stroke-width="1"/><path d="M7.6 9 H14.8 L11.2 12.8Z" fill="#f5f5f7" stroke="#2f8bd6" stroke-width="1.3" stroke-linejoin="round"/><path d="M11.2 12.5 V15.8" stroke="#2f8bd6" stroke-width="1.5"/></svg>
<div class="t " style="left:77px;top:516.10px;height:20px;line-height:20px;"><i class="c">头文件</i></div>
<svg class="r" style="left:35.5px;top:539.8px;" width="7" height="10" viewBox="0 0 7 10"><path d="M1 1 L5.6 5 L1 9Z" fill="#f5f5f7" stroke="#3a3a3a" stroke-width="1.1" stroke-linejoin="round"/></svg>
<svg class="r" style="left:57px;top:536.8px;" width="16" height="16" viewBox="0 0 16 16"><path d="M1 3 H6 L7.3 4.4 H14 V12 H1Z" fill="#c8973c"/><path d="M1 5.4 H14 V12 H1Z" fill="#e2c074"/><path d="M2.4 6.6 H12.6" stroke="#f1dca6" stroke-width="1"/><path d="M7.6 9 H14.8 L11.2 12.8Z" fill="#f5f5f7" stroke="#2f8bd6" stroke-width="1.3" stroke-linejoin="round"/><path d="M11.2 12.5 V15.8" stroke="#2f8bd6" stroke-width="1.5"/></svg>
<div class="t " style="left:77px;top:534.80px;height:20px;line-height:20px;"><i class="c">源文件</i></div>
<svg class="r" style="left:35.5px;top:558.5px;" width="7" height="10" viewBox="0 0 7 10"><path d="M1 1 L5.6 5 L1 9Z" fill="#f5f5f7" stroke="#3a3a3a" stroke-width="1.1" stroke-linejoin="round"/></svg>
<svg class="r" style="left:57px;top:555.5px;" width="16" height="16" viewBox="0 0 16 16"><path d="M1 3 H6 L7.3 4.4 H14 V12 H1Z" fill="#c8973c"/><path d="M1 5.4 H14 V12 H1Z" fill="#e2c074"/><path d="M2.4 6.6 H12.6" stroke="#f1dca6" stroke-width="1"/><path d="M7.6 9 H14.8 L11.2 12.8Z" fill="#f5f5f7" stroke="#2f8bd6" stroke-width="1.3" stroke-linejoin="round"/><path d="M11.2 12.5 V15.8" stroke="#2f8bd6" stroke-width="1.5"/></svg>
<div class="t " style="left:77px;top:553.50px;height:20px;line-height:20px;"><i class="c">资源文件</i></div>
<svg class="r" style="left:48px;top:578.1999999999999px;" width="6" height="8" viewBox="0 0 6 8"><path d="M1.6 3.6 V2.4 C1.6 .7 4.4 .7 4.4 2.4 V3.6" fill="none" stroke="#3a96d6" stroke-width="1"/><rect x=".6" y="3.5" width="4.8" height="4" rx=".6" fill="#7fbde6" stroke="#3a96d6" stroke-width="1"/></svg>
<svg class="r" style="left:57.2px;top:574.6999999999999px;" width="14" height="15" viewBox="0 0 14 15"><path d="M1.5 1 H8.5 L12 4.5 V14 H1.5Z" fill="#fafafa" stroke="#555" stroke-width="1.1"/><path d="M4 6 H9.5 M4 8.3 H9.5 M4 10.6 H9.5" stroke="#666" stroke-width="1"/></svg>
<div class="t " style="left:77.5px;top:572.20px;height:20px;line-height:20px;">ReadMe.txt</div>
<svg class="r" style="left:14px;top:996px;" width="6" height="9" viewBox="0 0 6 9"><path d="M5 .5 L.8 4.5 L5 8.5Z" fill="#8a8a92"/></svg>
<div class="r" style="left:25px;top:997px;width:163px;height:7px;background:#c5c6cd;"></div>
<svg class="r" style="left:247px;top:996px;" width="6" height="9" viewBox="0 0 6 9"><path d="M1 .5 L5.2 4.5 L1 8.5Z" fill="#8a8a92"/></svg>
<div class="t " style="left:12.7px;top:1008.50px;height:20px;line-height:20px;font-size:12.6px;color:#1173c4;"><i class="c">解决方案</i>...</div>
<div class="t " style="left:83.6px;top:1008.50px;height:20px;line-height:20px;font-size:12.6px;color:#444;"><i class="c">资源视图</i></div>
<div class="t " style="left:142px;top:1008.50px;height:20px;line-height:20px;font-size:12.6px;color:#444;"><i class="c">属性管理器</i></div>
<div class="t " style="left:211.4px;top:1008.50px;height:20px;line-height:20px;font-size:12.6px;color:#444;">Git <i class="c">更改</i></div>
<div class="r" style="left:266.5px;top:70.6px;width:128px;height:22px;background:#0671c3;"></div>
<div class="t b" style="left:270.8px;top:71.60px;height:20px;line-height:20px;font-size:12.3px;color:#fff;">WordParser.h</div>
<svg class="r" style="left:361px;top:77px;" width="10" height="9" viewBox="0 0 10 9"><path d="M0 4.5 H3.5 M3.5 1.5 V7.5 M3.5 2.5 H8 V6.5 H3.5" fill="none" stroke="#fff" stroke-width="1.1"/></svg>
<svg class="r" style="left:379px;top:77px;" width="10" height="10" viewBox="0 0 10 10"><path d="M1 1 L9 9 M9 1 L1 9" stroke="#fff" stroke-width="1.4"/></svg>
<div class="r" style="left:266.5px;top:91.6px;width:885.5px;height:1.6px;background:#0671c3;"></div>
<svg class="r" style="left:1125px;top:81px;" width="8" height="5" viewBox="0 0 8 5"><path d="M0 0 H7 L3.5 4 Z" fill="#555"/></svg>
<svg class="r" style="left:1141px;top:76px;" width="11" height="11" viewBox="0 0 11 11"><circle cx="5.5" cy="5.5" r="3" fill="none" stroke="#666" stroke-width="1.6"/><path d="M5.5 0 V11 M0 5.5 H11 M1.6 1.6 L9.4 9.4 M9.4 1.6 L1.6 9.4" stroke="#666" stroke-width="1.2" stroke-dasharray="1.6 7.8"/></svg>
<div class="r" style="left:266.5px;top:93.4px;width:852px;height:19.6px;background:#ffffff;"></div>
<div class="r" style="left:446px;top:93.4px;width:18.5px;height:19.6px;background:#f2f2f5;"></div>
<svg class="r" style="left:271px;top:99.7px;" width="10" height="9" viewBox="0 0 10 9"><path d="M.5 4.5 H7" stroke="#d8862a" stroke-width="2"/><path d="M4.6 1 L8.6 4.5 L4.6 8" fill="none" stroke="#d8862a" stroke-width="2" stroke-linejoin="round"/></svg>
<div class="t " style="left:288.5px;top:94.30px;height:20px;line-height:20px;font-size:12.6px;color:#222;">WordParser.h</div>
<svg class="r" style="left:435px;top:102.5px;" width="7" height="5" viewBox="0 0 7 5"><path d="M0 0 H6 L3 3.5 Z" fill="#555"/></svg>
<svg class="r" style="left:451px;top:97px;" width="7" height="14" viewBox="0 0 7 14"><path d="M3.5 1 L6 4 H1Z M3.5 13 L6 10 H1Z" fill="#777"/><path d="M0 7 H7" stroke="#ccc"/></svg>
<svg class="r" style="left:470.7px;top:99.7px;" width="10" height="9" viewBox="0 0 10 9"><path d="M.5 4.5 H7" stroke="#d8862a" stroke-width="2"/><path d="M4.6 1 L8.6 4.5 L4.6 8" fill="none" stroke="#d8862a" stroke-width="2" stroke-linejoin="round"/></svg>
<div class="t " style="left:488px;top:94.30px;height:20px;line-height:20px;font-size:13.2px;color:#222;">F:\apps\wordpaster\code\x86\atl\AtlControls\WordParser.h</div>
<svg class="r" style="left:1107px;top:102.5px;" width="7" height="5" viewBox="0 0 7 5"><path d="M0 0 H6 L3 3.5 Z" fill="#555"/></svg>
<div class="r" style="left:1118.5px;top:93.4px;width:33.5px;height:19.6px;background:#f3f3f6;"></div>
<svg class="r" style="left:1120px;top:96px;" width="13" height="14" viewBox="0 0 13 14"><path d="M2 13 C1 7 4 3 9 3 V.8 L12.5 4.5 L9 8 V6 C6 6 4.5 8 5 12Z" fill="#2f9a44"/><path d="M2 13 L5 12 L5.5 13.5Z" fill="#1f6f30"/></svg>
<div class="t " style="left:1132.5px;top:94.30px;height:20px;line-height:20px;font-size:13px;color:#222;">Go</div>
<div class="r" style="left:266.5px;top:113px;width:16.5px;height:896px;background:#e9e9ee;"></div>
<div class="r" style="left:283px;top:113.6px;width:851px;height:895.4px;background:#c7edcc;"></div>
<div class="r" style="left:346px;top:131px;width:1px;height:878px;background:#a9c9ae;"></div>
<div class="r" style="left:1134px;top:113.6px;width:18px;height:895.4px;background:#f1f1f4;"></div>
<div class="r" style="left:1152px;top:113px;width:1px;height:918px;background:#dcdde4;"></div>
<svg class="r" style="left:1136px;top:120px;" width="13" height="13" viewBox="0 0 13 13"><path d="M6.5 1 V12 M1.5 6.5 H11.5" stroke="#333" stroke-width="1.6"/><path d="M4.5 3 L6.5 .8 L8.5 3 M4.5 10 L6.5 12.2 L8.5 10" fill="none" stroke="#333" stroke-width="1"/></svg>
<svg class="r" style="left:1139px;top:142px;" width="8" height="5" viewBox="0 0 8 5"><path d="M0 4.5 H8 L4 .5Z" fill="#8a8a92"/></svg>
<div class="r" style="left:1134px;top:151px;width:18px;height:2px;background:#1c1c8c;"></div>
<div class="r" style="left:1138px;top:197.7px;width:9.5px;height:303.6px;background:#c3c4ca;"></div>
<svg class="r" style="left:1139px;top:998px;" width="8" height="5" viewBox="0 0 8 5"><path d="M0 .5 H8 L4 4.5Z" fill="#8a8a92"/></svg>
<div class="r" style="left:1147px;top:200px;width:5px;height:5.4px;background:#ee1111;"></div>
<div class="r" style="left:1147px;top:303.7px;width:5px;height:5.5px;background:#ee1111;"></div>
<div class="r" style="left:1147px;top:311px;width:5px;height:5.6px;background:#ee1111;"></div>
<div class="r" style="left:1147px;top:318.5px;width:5px;height:31.5px;background:#ee1111;"></div>
<div class="r" style="left:1147px;top:353.6px;width:5px;height:11.0px;background:#ee1111;"></div>
<div class="r" style="left:1147px;top:368.3px;width:5px;height:9.3px;background:#ee1111;"></div>
<div class="r" style="left:1147px;top:385px;width:5px;height:5.5px;background:#ee1111;"></div>
<div class="r" style="left:1147px;top:455px;width:5px;height:9.4px;background:#ee1111;"></div>
<div class="r" style="left:1147px;top:492px;width:5px;height:11px;background:#ee1111;"></div>
<div class="r" style="left:1147px;top:507.6px;width:5px;height:5.9px;background:#ee1111;"></div>
<div class="r" style="left:1147px;top:546.7px;width:5px;height:8.9px;background:#ee1111;"></div>
<div class="r" style="left:1147px;top:563px;width:5px;height:10.3px;background:#ee1111;"></div>
<div class="r" style="left:1147px;top:575px;width:5px;height:5.7px;background:#ee1111;"></div>
<div class="t" style="left:1136px;top:80.2px;width:60px;height:16px;line-height:16px;font-size:11.5px;color:#555;text-align:center;transform:rotate(90deg);">工具箱</div>
<div class="t" style="left:1136px;top:121.5px;width:60px;height:16px;line-height:16px;font-size:11.5px;color:#555;text-align:center;transform:rotate(90deg);">通知</div>
<div class="t" style="left:1136px;top:156px;width:60px;height:16px;line-height:16px;font-size:11.5px;color:#555;text-align:center;transform:rotate(90deg);">属性</div>
<div class="r" style="left:1177.5px;top:71px;width:6.5px;height:39px;background:#d3d3dc;"></div>
<div class="r" style="left:1177.5px;top:117px;width:6.5px;height:24px;background:#d3d3dc;"></div>
<div class="r" style="left:1177.5px;top:153px;width:6.5px;height:23px;background:#d3d3dc;"></div>
<div class="r" style="left:0;top:113.6px;width:1134px;height:895.4px;overflow:hidden;">
<div class="t ln" style="left:273.5px;top:1.00px;height:16px;line-height:16px;">18</div>
<div class="t code" style="left:351.5px;top:1.00px;height:16px;line-height:16px;"><span class="k">class</span> <span class="m">ATL_NO_VTABLE</span> <span class="ty">CWordParser</span> :</div>
<div class="t ln" style="left:273.5px;top:15.63px;height:16px;line-height:16px;">19</div>
<div class="t code" style="left:375.7px;top:15.63px;height:16px;line-height:16px;"><span class="k">public</span> <span class="ty">CComObjectRootEx</span>&lt;<span class="ty">CComSingleThreadModel</span>&gt;,</div>
<div class="t ln" style="left:273.5px;top:30.27px;height:16px;line-height:16px;">20</div>
<div class="t code" style="left:375.7px;top:30.27px;height:16px;line-height:16px;"><span class="k">public</span> <span class="ty">CComCoClass</span>&lt;<span class="ty">CWordParser</span>, &amp;<span class="p">CLSID_WordParser</span>&gt;,</div>
<div class="t ln" style="left:273.5px;top:44.90px;height:16px;line-height:16px;">21</div>
<div class="t code" style="left:375.7px;top:44.90px;height:16px;line-height:16px;"><span class="k">public</span> <span class="ty">IObjectWithSiteImpl</span>&lt;<span class="ty">CWordParser</span>&gt;,</div>
<div class="t ln" style="left:273.5px;top:59.53px;height:16px;line-height:16px;">22</div>
<div class="t code" style="left:375.7px;top:59.53px;height:16px;line-height:16px;"><span class="k">public</span> <span class="ty">IDispatchImpl</span>&lt;<span class="ty">IWordParser</span>, &amp;<span class="p">IID_IWordParser</span>, &amp;<span class="p">LIBID_WordPasterAppLib</span>, <span class="cm">/*wMajor =*/</span> 1, <span class="cm">/*wMinor =*/</span> 0&gt;</div>
<div class="t ln" style="left:273.5px;top:74.16px;height:16px;line-height:16px;">23</div>
<div class="t code" style="left:375.7px;top:74.16px;height:16px;line-height:16px;">,<span class="k">public</span> <span class="ty">IObjectSafetyImpl</span>&lt;<span class="ty">CWordParser</span>, <span class="ty">INTERFACESAFE_FOR_UNTRUSTED_CALLER</span>&gt;</div>
<div class="t ln" style="left:273.5px;top:88.80px;height:16px;line-height:16px;">24</div>
<div class="t code" style="left:375.7px;top:88.80px;height:16px;line-height:16px;">,<span class="k">public</span> <span class="ty">sigslot</span>::<span class="ty">has_slots</span>&lt;&gt;</div>
<div class="t ln" style="left:273.5px;top:103.43px;height:16px;line-height:16px;">25</div>
<div class="t code" style="left:351.5px;top:103.43px;height:16px;line-height:16px;">{</div>
<div class="t ln" style="left:273.5px;top:118.06px;height:16px;line-height:16px;">26</div>
<div class="t code" style="left:375.7px;top:118.06px;height:16px;line-height:16px;"><span class="k">typedef</span> <span class="k">struct</span> <span class="ty">_datadef</span><span class="box">{ ... }</span><span class="ty">DataDef</span>;</div>
<div class="t ln" style="left:273.5px;top:132.70px;height:16px;line-height:16px;">31</div>
<div class="t code" style="left:351.5px;top:132.70px;height:16px;line-height:16px;"><span class="k">public</span>:</div>
<div class="t ln" style="left:273.5px;top:147.33px;height:16px;line-height:16px;">32</div>
<div class="t code" style="left:375.7px;top:147.33px;height:16px;line-height:16px;"><span class="ty">CWordParser</span>();</div>
<div class="t ln" style="left:273.5px;top:161.96px;height:16px;line-height:16px;">33</div>
<div class="t ln" style="left:273.5px;top:176.60px;height:16px;line-height:16px;">34</div>
<div class="t code" style="left:351.5px;top:176.60px;height:16px;line-height:16px;"><span class="m">DECLARE_REGISTRY_RESOURCEID</span>(<span class="m">IDR_WORDPARSER</span>)</div>
<div class="t ln" style="left:273.5px;top:191.23px;height:16px;line-height:16px;">35</div>
<div class="t ln" style="left:273.5px;top:205.86px;height:16px;line-height:16px;">36</div>
<div class="t ln" style="left:273.5px;top:220.49px;height:16px;line-height:16px;">37</div>
<div class="t code" style="left:351.5px;top:220.49px;height:16px;line-height:16px;"><span class="m">BEGIN_COM_MAP</span>(<span class="ty">CWordParser</span>)<span class="box">...</span></div>
<div class="t ln" style="left:273.5px;top:235.13px;height:16px;line-height:16px;">42</div>
<div class="t code" style="left:351.5px;top:235.13px;height:16px;line-height:16px;"><span class="m">END_COM_MAP</span>()</div>
<div class="t ln" style="left:273.5px;top:249.76px;height:16px;line-height:16px;">43</div>
<div class="t ln" style="left:273.5px;top:264.39px;height:16px;line-height:16px;">44</div>
<div class="t code" style="left:375.7px;top:264.39px;height:16px;line-height:16px;"><span class="m">DECLARE_PROTECT_FINAL_CONSTRUCT</span>()</div>
<div class="t ln" style="left:273.5px;top:279.03px;height:16px;line-height:16px;">45</div>
<div class="t ln" style="left:273.5px;top:293.66px;height:16px;line-height:16px;">46</div>
<div class="t code" style="left:375.7px;top:293.66px;height:16px;line-height:16px;"><span class="ty">HRESULT</span> <span class="f">FinalConstruct</span>();</div>
<div class="t ln" style="left:273.5px;top:308.29px;height:16px;line-height:16px;">47</div>
<div class="t code" style="left:375.7px;top:308.29px;height:16px;line-height:16px;"><span class="k">void</span> <span class="f">FinalRelease</span>();</div>
<div class="t ln" style="left:273.5px;top:322.93px;height:16px;line-height:16px;">48</div>
<div class="t ln" style="left:273.5px;top:337.56px;height:16px;line-height:16px;">49</div>
<div class="t code" style="left:351.5px;top:337.56px;height:16px;line-height:16px;"><span class="k sq">public</span>:</div>
<div class="t ln" style="left:273.5px;top:352.19px;height:16px;line-height:16px;">50</div>
<div class="t code" style="left:375.7px;top:352.19px;height:16px;line-height:16px;"><span class="m">STDMETHOD</span>(<span class="f">postMessage</span>)(<span class="ty">BSTR</span> <span class="p">jsonStr</span>);</div>
<div class="t ln" style="left:273.5px;top:366.82px;height:16px;line-height:16px;">51</div>
<div class="t code" style="left:375.7px;top:366.82px;height:16px;line-height:16px;"><span class="m sq">STDMETHOD</span>(<span class="f">put_recvMessage</span>)(<span class="ty">IDispatchEx</span>* <span class="p">val</span>);</div>
<div class="t ln" style="left:273.5px;top:381.46px;height:16px;line-height:16px;">52</div>
<div class="t code" style="left:375.7px;top:381.46px;height:16px;line-height:16px;"><span class="m sq">STDMETHOD</span>(<span class="f">Init</span>)(<span class="ty">BSTR</span> <span class="p">jsonStr</span>);</div>
<div class="t ln" style="left:273.5px;top:396.09px;height:16px;line-height:16px;">53</div>
<div class="t code" style="left:375.7px;top:396.09px;height:16px;line-height:16px;"><span class="m sq">STDMETHOD</span>(<span class="f">Paste</span>)( );</div>
<div class="t ln" style="left:273.5px;top:410.72px;height:16px;line-height:16px;">54</div>
<div class="t code" style="left:375.7px;top:410.72px;height:16px;line-height:16px;"><span class="m sq">STDMETHOD</span>(<span class="f">PasteAuto</span>)(<span class="ty">BSTR</span> <span class="p">html</span>);</div>
<div class="t ln" style="left:273.5px;top:425.36px;height:16px;line-height:16px;">55</div>
<div class="t code" style="left:375.7px;top:425.36px;height:16px;line-height:16px;"><span class="m sq">STDMETHOD</span>(<span class="f">HasData</span>)( <span class="ty">VARIANT_BOOL</span>* <span class="p">val</span> );</div>
<div class="t ln" style="left:273.5px;top:439.99px;height:16px;line-height:16px;">56</div>
<div class="t code" style="left:375.7px;top:439.99px;height:16px;line-height:16px;"><span class="m sq">STDMETHOD</span>(<span class="f">put_StateChanged</span>)( <span class="ty">IDispatchEx</span>* <span class="p">newVal</span> );</div>
<div class="t ln" style="left:273.5px;top:454.62px;height:16px;line-height:16px;">57</div>
<div class="t code" style="left:375.7px;top:454.62px;height:16px;line-height:16px;"><span class="m sq">STDMETHOD</span>(<span class="f">get_Version</span>)(<span class="ty">BSTR</span>* <span class="p">newVal</span>);</div>
<div class="t ln" style="left:273.5px;top:469.26px;height:16px;line-height:16px;">58</div>
<div class="t code" style="left:375.7px;top:469.26px;height:16px;line-height:16px;"><span class="m sq">STDMETHOD</span>(<span class="f">FireStateChanged</span>)( <span class="ty">BSTR</span> <span class="p">json</span> );</div>
<div class="t ln" style="left:273.5px;top:483.89px;height:16px;line-height:16px;">59</div>
<div class="t ln" style="left:273.5px;top:498.52px;height:16px;line-height:16px;">60</div>
<div class="t code" style="left:375.7px;top:498.52px;height:16px;line-height:16px;"><span class="k">void</span> <span class="f sq">post_complete</span>( <span class="ty sq">wstring</span> <span class="p sq">res</span> );</div>
<div class="t ln" style="left:273.5px;top:513.15px;height:16px;line-height:16px;">61</div>
<div class="t code" style="left:375.7px;top:513.15px;height:16px;line-height:16px;"><span class="k">void</span> <span class="f">post_error</span>(<span class="ty">UINT</span> <span class="p">err</span>);</div>
<div class="t ln" style="left:273.5px;top:527.79px;height:16px;line-height:16px;">62</div>
<div class="t code" style="left:375.7px;top:527.79px;height:16px;line-height:16px;"><span class="k">void</span> <span class="f">post_process</span>(<span class="ty">UperSpeeder</span>* <span class="p">s</span>);</div>
<div class="t ln" style="left:273.5px;top:542.42px;height:16px;line-height:16px;">63</div>
<div class="t ln" style="left:273.5px;top:557.05px;height:16px;line-height:16px;">64</div>
<div class="t code" style="left:351.5px;top:557.05px;height:16px;line-height:16px;"><span class="k sqb">public</span>:</div>
<div class="t ln" style="left:273.5px;top:571.69px;height:16px;line-height:16px;">65</div>
<div class="t code" style="left:375.7px;top:571.69px;height:16px;line-height:16px;"><span class="ty">DataDef</span>&amp; <span class="f">getData</span>() { <span class="k">return</span> <span class="k">this</span>-&gt;<span class="p">data</span>; }</div>
<div class="t ln" style="left:273.5px;top:586.32px;height:16px;line-height:16px;">66</div>
<div class="t code" style="left:375.7px;top:586.32px;height:16px;line-height:16px;"><span class="k">void</span> <span class="f">bindMethods</span>();</div>
<div class="t ln" style="left:273.5px;top:600.95px;height:16px;line-height:16px;">67</div>
<div class="t code" style="left:375.7px;top:600.95px;height:16px;line-height:16px;"><span class="k">void</span> <span class="f">init</span>( <span class="ty">Json</span>::<span class="ty">Value</span>&amp; <span class="p">v</span> );</div>
<div class="t ln" style="left:273.5px;top:615.59px;height:16px;line-height:16px;">68</div>
<div class="t code" style="left:375.7px;top:615.59px;height:16px;line-height:16px;"><span class="k">void</span> <span class="f">initConfig</span>( <span class="ty">Json</span>::<span class="ty">Value</span>&amp; <span class="p">v</span> );</div>
<div class="t ln" style="left:273.5px;top:630.22px;height:16px;line-height:16px;">69</div>
<div class="t code" style="left:375.7px;top:630.22px;height:16px;line-height:16px;"><span class="k">void</span> <span class="f">initFields</span>( <span class="ty">Json</span>::<span class="ty">Value</span>&amp; <span class="p">v</span> );</div>
<div class="t ln" style="left:273.5px;top:644.85px;height:16px;line-height:16px;">70</div>
<div class="t code" style="left:375.7px;top:644.85px;height:16px;line-height:16px;"><span class="k">void</span> <span class="f">paste</span>( <span class="ty">Json</span>::<span class="ty">Value</span>&amp; <span class="p">v</span> );</div>
<div class="t ln" style="left:273.5px;top:659.49px;height:16px;line-height:16px;">71</div>
<div class="t code" style="left:375.7px;top:659.49px;height:16px;line-height:16px;"><span class="k">void</span> <span class="f">pasteAuto</span>( <span class="ty">Json</span>::<span class="ty">Value</span>&amp; <span class="p">v</span> );</div>
<div class="t ln" style="left:273.5px;top:674.12px;height:16px;line-height:16px;">72</div>
<div class="t code" style="left:375.7px;top:674.12px;height:16px;line-height:16px;"><span class="k">void</span> <span class="f">pastePPT</span>(<span class="ty">Json</span>::<span class="ty">Value</span>&amp; <span class="p">v</span>);</div>
<div class="t ln" style="left:273.5px;top:688.75px;height:16px;line-height:16px;">73</div>
<div class="t code" style="left:375.7px;top:688.75px;height:16px;line-height:16px;"><span class="k">void</span> <span class="f">importPPT</span>(<span class="ty">Json</span>::<span class="ty">Value</span>&amp; <span class="p">v</span>);</div>
<div class="t ln" style="left:273.5px;top:703.38px;height:16px;line-height:16px;">74</div>
<div class="t code" style="left:375.7px;top:703.38px;height:16px;line-height:16px;"><span class="k">void</span> <span class="f">StateChanged</span>( <span class="ty">BSTR</span> <span class="p">json</span> );</div>
<div class="t ln" style="left:273.5px;top:718.02px;height:16px;line-height:16px;">75</div>
<div class="t code" style="left:375.7px;top:718.02px;height:16px;line-height:16px;"><span class="k">void</span> <span class="f">sendJson</span>( <span class="ty">Json</span>::<span class="ty">Value</span>&amp; <span class="p">j</span> );</div>
<div class="t ln" style="left:273.5px;top:732.65px;height:16px;line-height:16px;">76</div>
<div class="t code" style="left:375.7px;top:732.65px;height:16px;line-height:16px;"><span class="k">void</span> <span class="f">sendMsg</span>(<span class="k">const</span> <span class="ty sq">string</span>&amp; <span class="p">name</span>, <span class="k">const</span> <span class="ty sq">wstring</span>&amp; <span class="p">v</span>);</div>
<div class="t ln" style="left:273.5px;top:747.28px;height:16px;line-height:16px;">77</div>
<div class="t ln" style="left:273.5px;top:761.92px;height:16px;line-height:16px;">78</div>
<div class="t code" style="left:375.7px;top:761.92px;height:16px;line-height:16px;"><span class="k">bool</span> <span class="f">SafeCheck</span>();</div>
<div class="t ln" style="left:273.5px;top:776.55px;height:16px;line-height:16px;">79</div>
<div class="t code" style="left:375.7px;top:776.55px;height:16px;line-height:16px;"><span class="k">void</span> <span class="f">PasteWord</span>();</div>
<div class="t ln" style="left:273.5px;top:791.18px;height:16px;line-height:16px;">80</div>
<div class="t code" style="left:375.7px;top:791.18px;height:16px;line-height:16px;"><span class="k">void</span> <span class="f">PasteText</span>();</div>
<div class="t ln" style="left:273.5px;top:805.81px;height:16px;line-height:16px;">81</div>
<div class="t code" style="left:375.7px;top:805.81px;height:16px;line-height:16px;"><span class="k">void</span> <span class="f">PasteWeb</span>();</div>
<div class="t ln" style="left:273.5px;top:820.45px;height:16px;line-height:16px;">82</div>
<div class="t code" style="left:375.7px;top:820.45px;height:16px;line-height:16px;"><span class="k">bool</span> <span class="f">PasteHBITMAP</span>();</div>
<div class="t ln" style="left:273.5px;top:835.08px;height:16px;line-height:16px;">83</div>
<div class="t code" style="left:375.7px;top:835.08px;height:16px;line-height:16px;"><span class="k">void</span> <span class="f">PasteDIB</span>();</div>
<div class="t ln" style="left:273.5px;top:849.71px;height:16px;line-height:16px;">84</div>
<div class="t code" style="left:375.7px;top:849.71px;height:16px;line-height:16px;"><span class="k">void</span> <span class="f">PasteFiles</span>();<span class="cm">//</span><span class="cm zh">粘贴多张图片</span></div>
<div class="t ln" style="left:273.5px;top:864.35px;height:16px;line-height:16px;">85</div>
<div class="t code" style="left:375.7px;top:864.35px;height:16px;line-height:16px;"><span class="k">void</span> <span class="f">postData</span>(<span class="ty">std</span>::<span class="ty">shared_ptr</span>&lt;<span class="ty sq">MemFile</span>&gt; <span class="p">data</span> , <span class="ty sq">string</span>&amp; <span class="p">fname</span>);</div>
<div class="t ln" style="left:273.5px;top:878.98px;height:16px;line-height:16px;">86</div>
<div class="t code" style="left:351.5px;top:893.61px;height:16px;line-height:16px;"><span class="k">private</span>:</div>
</div>
<svg class="r" style="left:342px;top:119.6px;" width="8" height="6" viewBox="0 0 8 6"><path d="M.8 1 L4 4.6 L7.2 1" fill="none" stroke="#2c4a33" stroke-width="1.4"/></svg>
<svg class="r" style="left:343px;top:235.664px;" width="6" height="8" viewBox="0 0 6 8"><path d="M1 .8 L4.6 4 L1 7.2" fill="none" stroke="#2c4a33" stroke-width="1.4"/></svg>
<svg class="r" style="left:343px;top:338.09499999999997px;" width="6" height="8" viewBox="0 0 6 8"><path d="M1 .8 L4.6 4 L1 7.2" fill="none" stroke="#2c4a33" stroke-width="1.4"/></svg>
<div class="r" style="left:266.5px;top:1009px;width:885.5px;height:21px;background:#f3f3f6;"></div>
<div class="r" style="left:264.6px;top:1009.5px;width:60px;height:19px;background:#ffffff;border:1px solid #dfe0e6;box-sizing:border-box;"></div>
<div class="t " style="left:269.5px;top:1009.00px;height:20px;line-height:20px;font-size:11.7px;color:#222;">100 %</div>
<svg class="r" style="left:316px;top:1017.5px;" width="7" height="5" viewBox="0 0 7 5"><path d="M0 0 H6 L3 3.5 Z" fill="#666"/></svg>
<svg class="r" style="left:328px;top:1011px;" width="14" height="15" viewBox="0 0 14 15"><path d="M3 13 C1 9 3 3 8 3 C12 3 13 7 11 9 C9 11 7 9 8 7" fill="none" stroke="#7a6fc0" stroke-width="1.3"/><circle cx="9" cy="12" r="1.6" fill="#7a6fc0"/></svg>
<svg class="r" style="left:368px;top:1012.5px;" width="12" height="12" viewBox="0 0 12 12"><circle cx="6" cy="6" r="5.6" fill="#d42a2a"/><path d="M3.8 3.8 L8.2 8.2 M8.2 3.8 L3.8 8.2" stroke="#fff" stroke-width="1.4"/></svg>
<div class="t " style="left:386.2px;top:1009.00px;height:20px;line-height:20px;font-size:12.3px;color:#222;">27</div>
<svg class="r" style="left:413px;top:1012.5px;" width="13" height="12" viewBox="0 0 13 12"><path d="M6.5 .8 L12.4 11.2 H.6Z" fill="#e5a21a"/><path d="M6.5 4.3 V8" stroke="#3a2a00" stroke-width="1.3"/><circle cx="6.5" cy="9.6" r=".8" fill="#3a2a00"/></svg>
<div class="t " style="left:429.5px;top:1009.00px;height:20px;line-height:20px;font-size:12.3px;color:#222;">0</div>
<svg class="r" style="left:468px;top:1013px;" width="10" height="12" viewBox="0 0 10 12"><path d="M5 11 V1.5 M1.5 5 L5 1.5 L8.5 5" fill="none" stroke="#444" stroke-width="1.2"/></svg>
<svg class="r" style="left:497px;top:1013px;" width="10" height="12" viewBox="0 0 10 12"><path d="M5 1 V10.5 M1.5 7 L5 10.5 L8.5 7" fill="none" stroke="#444" stroke-width="1.2"/></svg>
<svg class="r" style="left:536px;top:1012px;" width="15" height="13" viewBox="0 0 15 13"><path d="M2 12 L8 5" stroke="#c9a14a" stroke-width="2.2"/><path d="M7 2 L12 7 L10 9 L5 4Z" fill="#666"/><path d="M10 1 L13 1 L11.5 3Z" fill="#3b8ad4"/></svg>
<svg class="r" style="left:554px;top:1017.5px;" width="7" height="5" viewBox="0 0 7 5"><path d="M0 0 H6 L3 3.5 Z" fill="#333"/></svg>
<div class="r" style="left:586px;top:1009.5px;width:194px;height:19px;background:#ffffff;border:1px solid #d5d6dd;box-sizing:border-box;"></div>
<svg class="r" style="left:592px;top:1013px;" width="8" height="12" viewBox="0 0 8 12"><path d="M6.5 1 L1.5 6 L6.5 11" fill="none" stroke="#333" stroke-width="1.3"/></svg>
<div class="t chg" style="left:604.7px;top:1009.00px;height:20px;line-height:20px;">0 <i class="z">项更改</i>| 0 <i class="z">名作者</i>, 0 <i class="z">项更改</i></div>
<div class="t " style="left:984.4px;top:1009.50px;height:20px;line-height:20px;font-size:11.8px;color:#333;"><i class="c">行</i>: 1</div>
<div class="t " style="left:1025px;top:1009.50px;height:20px;line-height:20px;font-size:11.8px;color:#333;"><i class="c">字符</i>: 1</div>
<div class="t " style="left:1076.6px;top:1009.50px;height:20px;line-height:20px;font-size:11.8px;color:#333;"><i class="c">混合</i></div>
<div class="t " style="left:1117.7px;top:1009.50px;height:20px;line-height:20px;font-size:10.8px;color:#333;">CRLF</div>
<div class="t " style="left:7.6px;top:1032.30px;height:20px;line-height:20px;font-size:12.7px;color:#333;"><i class="c">输出</i></div>
<div class="r" style="left:7.6px;top:1053.5px;width:21.8px;height:5px;background:#e1e1e8;"></div>
<div class="t " style="left:43px;top:1032.30px;height:20px;line-height:20px;font-size:12.7px;color:#333;"><i class="c">命令窗口</i></div>
<div class="r" style="left:43px;top:1053.5px;width:45.7px;height:5px;background:#e1e1e8;"></div>
<div class="t " style="left:100.4px;top:1032.30px;height:20px;line-height:20px;font-size:12.7px;color:#333;"><i class="c">查找符号结果</i></div>
<div class="r" style="left:100.4px;top:1053.5px;width:70.4px;height:5px;background:#e1e1e8;"></div>
<div class="t " style="left:182.5px;top:1032.30px;height:20px;line-height:20px;font-size:12.7px;color:#333;"><i class="c">错误列表</i></div>
<div class="r" style="left:182.5px;top:1053.5px;width:46.5px;height:5px;background:#e1e1e8;"></div>
<div class="t " style="left:240.8px;top:1032.30px;height:20px;line-height:20px;font-size:12.7px;color:#333;"><i class="c">即时窗口</i></div>
<div class="r" style="left:240.8px;top:1053.5px;width:46.6px;height:5px;background:#e1e1e8;"></div>
<div class="t " style="left:299px;top:1032.30px;height:20px;line-height:20px;font-size:12.7px;color:#333;"><i class="c">程序包管理器控制台</i></div>
<div class="r" style="left:299px;top:1053.5px;width:105px;height:5px;background:#e1e1e8;"></div>
<div class="r" style="left:0px;top:1058.4px;width:1184px;height:24.6px;background:#0b70c4;"></div>
<div class="r" style="left:0px;top:1081.3px;width:1184px;height:1.7px;background:#0a5a9e;"></div>
<div class="r" style="left:0px;top:1058.4px;width:1.3px;height:24.6px;background:#0a4f8c;"></div>
<svg class="r" style="left:5px;top:1063px;" width="16" height="15" viewBox="0 0 16 15"><path d="M1.5 1.5 H14 V10.5 H7 L4 13.5 V10.5 H1.5Z" fill="none" stroke="#fff" stroke-width="1.3" stroke-linejoin="round"/></svg>
<div class="t " style="left:28.2px;top:1061.00px;height:20px;line-height:20px;font-size:12.4px;color:#fff;"><i class="c">就绪</i></div>
<svg class="r" style="left:841px;top:1064.5px;" width="11" height="13" viewBox="0 0 11 13"><path d="M3 12 V1.5 M.8 4 L3 1.5 L5.2 4 M8 1 V11.5 M5.8 9 L8 11.5 L10.2 9" fill="none" stroke="#fff" stroke-width="1.2"/></svg>
<div class="t " style="left:859.5px;top:1061.20px;height:20px;line-height:20px;font-size:12.6px;color:#fff;letter-spacing:.7px;">0 / 0</div>
<svg class="r" style="left:891px;top:1068.5px;" width="8" height="5" viewBox="0 0 8 5"><path d="M0 4.5 H8 L4 .5Z" fill="#fff"/></svg>
<svg class="r" style="left:924px;top:1064.5px;" width="12" height="13" viewBox="0 0 12 13"><path d="M1.5 11.5 L2.3 8.2 L8.8 1.7 L11 3.9 L4.5 10.4Z" fill="none" stroke="#fff" stroke-width="1.2" stroke-linejoin="round"/></svg>
<div class="t " style="left:942px;top:1061.20px;height:20px;line-height:20px;font-size:12.6px;color:#fff;">0</div>
<svg class="r" style="left:971px;top:1064px;" width="14" height="14" viewBox="0 0 14 14"><circle cx="3.5" cy="3" r="1.9" fill="none" stroke="#fff" stroke-width="1.1"/><circle cx="3.5" cy="11" r="1.9" fill="none" stroke="#fff" stroke-width="1.1"/><circle cx="10.5" cy="6" r="1.9" fill="none" stroke="#fff" stroke-width="1.1"/><path d="M3.5 5 V9 M10.5 8 C10.5 10 6 9 5 10.5" fill="none" stroke="#fff" stroke-width="1.1"/></svg>
<div class="t " style="left:992px;top:1061.20px;height:20px;line-height:20px;font-size:12.6px;color:#fff;">2.0.47</div>
<svg class="r" style="left:1032.5px;top:1068.5px;" width="8" height="5" viewBox="0 0 8 5"><path d="M0 4.5 H8 L4 .5Z" fill="#fff"/></svg>
<svg class="r" style="left:1067px;top:1064px;" width="17" height="14" viewBox="0 0 17 14"><path d="M1 1.5 H13 V5 M1 1.5 V10 H7 M1 4.5 H13" fill="none" stroke="#fff" stroke-width="1.1"/><circle cx="11" cy="9.5" r="2.6" fill="none" stroke="#fff" stroke-width="1.1"/><path d="M11 8 V11 M9.5 9.5 H12.5" stroke="#fff"/></svg>
<div class="t " style="left:1088.3px;top:1061.20px;height:20px;line-height:20px;font-size:12.4px;color:#fff;">x86</div>
<svg class="r" style="left:1114.5px;top:1068.5px;" width="8" height="5" viewBox="0 0 8 5"><path d="M0 4.5 H8 L4 .5Z" fill="#fff"/></svg>
<svg class="r" style="left:1141px;top:1063.5px;" width="15" height="15" viewBox="0 0 15 15"><path d="M2.5 11 C4 9.5 3.5 7 4 5 C4.6 2.6 6 1.5 7.5 1.5 C9 1.5 10.4 2.6 11 5 C11.5 7 11 9.5 12.5 11Z M6 12.5 C6.3 14 8.7 14 9 12.5" fill="none" stroke="#fff" stroke-width="1.2" stroke-linejoin="round"/></svg>
<div class="t " style="left:1078px;top:1051.50px;height:20px;line-height:20px;font-size:15.5px;color:rgba(255,255,255,.22);">@51CTO<i class="c">博客</i></div>
</div>
</body></html>
